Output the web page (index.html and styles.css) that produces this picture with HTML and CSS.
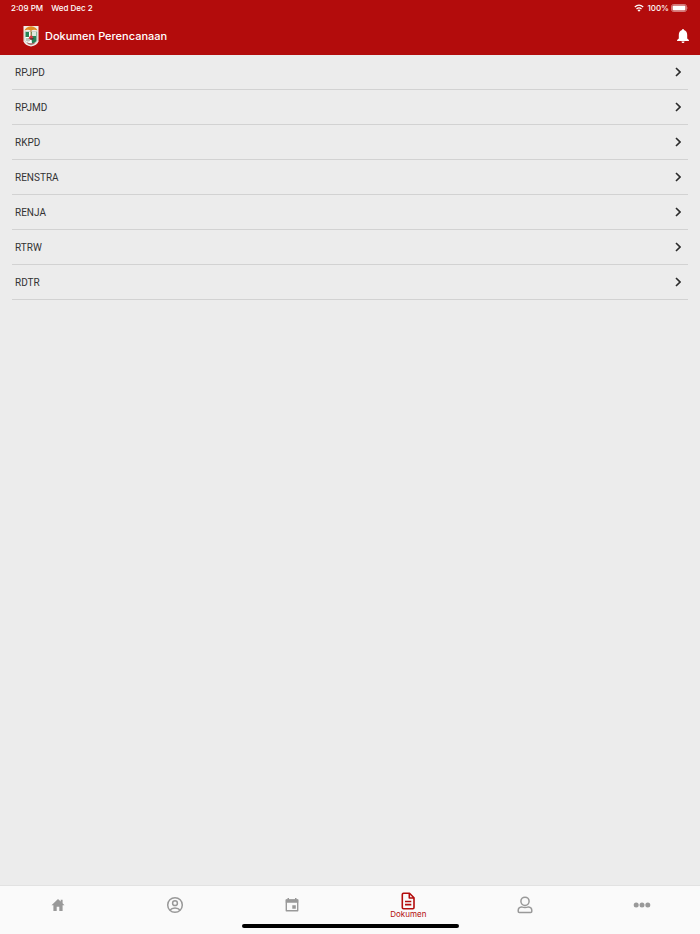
FILE: index.html
```
<!DOCTYPE html>
<html lang="id">
<head>
    <meta charset="UTF-8">
    <meta name="viewport" content="width=device-width, initial-scale=1.0">
    <title>Dokumen Perencanaan</title>
    <link rel="stylesheet" href="styles.css">
</head>
<body>
    <header class="main-header">
        <div class="status-bar">
            <span class="status-time">2:09 PM</span>
            <span class="status-date">Wed Dec 2</span>
            <svg class="wifi" viewBox="0 0 10 8" aria-hidden="true">
                <path d="M.8 3Q5-.8 9.200 3M2.500 5Q5 2.800 7.500 5" fill="none" stroke="#fff" stroke-width="1.300"/>
                <path d="M5 7.700L3.500 6.200Q5 5 6.500 6.200z" fill="#fff"/>
            </svg>
            <span>100%</span>
            <svg class="battery" viewBox="0 0 18 8" aria-hidden="true">
                <rect x=".5" y=".5" width="15" height="7" rx="2" fill="none" stroke="#fff" stroke-opacity=".45"/>
                <rect x="1.500" y="1.500" width="13" height="5" rx="1" fill="#fff"/>
                <path d="M16.500 2.800q1 1.200 0 2.400z" fill="#fff" fill-opacity=".5"/>
            </svg>
        </div>
        <div class="title-bar">
            <svg class="logo" viewBox="0 0 16 22" aria-hidden="true">
                <path d="M.5 1h15v15.500Q14 20.500 8 21.500Q2 20.500.5 16.500z" fill="#f1eeea"/>
                <path d="M2 6.500h12V16q-1.500 3-6 4-4.500-1-6-4z" fill="#fff" stroke="#a7aaa3" stroke-width=".5"/>
                <path d="M2.500 7H6v5H2.500zM8 7h5.500v9Q12 18 9 19z" fill="#268356"/>
                <path d="M9 7h4v4H9z" fill="#dfe8df"/>
                <path d="M3 13h4v3q-2 1-4 0z" fill="#bcc9bd"/>
                <path d="M1.500 5.500Q2.500 2 8 1.200Q13.500 2 14.500 5.500Q11 4.200 8 5.500Q5 4.200 1.500 5.500z" fill="#e18a24"/>
                <path d="M7.500 5h1v6h-1z" fill="#b8803f"/>
                <path d="M5.500 13.500Q6.500 10 9 10.500l1.500 3-2 1.500z" fill="#d93440"/>
                <path d="M7 13.500l4-.5-1 1.500H7z" fill="#393c38"/>
                <path d="M3.500 17Q8 19.500 12.500 17L11 19l-3 1-3-1z" fill="#a9696a"/>
            </svg>
            <h1>Dokumen Perencanaan</h1>
            <button class="bell-button" type="button" aria-label="Notifikasi">
                <svg viewBox="0 0 12 14" aria-hidden="true">
                    <path d="M5 1a1 1 0 0 1 2 0Q10.200 2 10.200 6v3.500l1.700 1.500v.9H.1V11l1.700-1.500V6Q1.800 2 5 1zM4.500 12.500h3a1.500 1.500 0 0 1-3 0z" fill="#fff"/>
                </svg>
            </button>
        </div>
    </header>

    <main>
        <ul class="document-list">
            <li><a href="#rpjpd">RPJPD <svg class="chevron" viewBox="0 0 6 10" aria-hidden="true"><path d="M1 1l4 4-4 4"/></svg></a></li>
            <li><a href="#rpjmd">RPJMD <svg class="chevron" viewBox="0 0 6 10" aria-hidden="true"><path d="M1 1l4 4-4 4"/></svg></a></li>
            <li><a href="#rkpd">RKPD <svg class="chevron" viewBox="0 0 6 10" aria-hidden="true"><path d="M1 1l4 4-4 4"/></svg></a></li>
            <li><a href="#renstra">RENSTRA <svg class="chevron" viewBox="0 0 6 10" aria-hidden="true"><path d="M1 1l4 4-4 4"/></svg></a></li>
            <li><a href="#renja">RENJA <svg class="chevron" viewBox="0 0 6 10" aria-hidden="true"><path d="M1 1l4 4-4 4"/></svg></a></li>
            <li><a href="#rtrw">RTRW <svg class="chevron" viewBox="0 0 6 10" aria-hidden="true"><path d="M1 1l4 4-4 4"/></svg></a></li>
            <li><a href="#rdtr">RDTR <svg class="chevron" viewBox="0 0 6 10" aria-hidden="true"><path d="M1 1l4 4-4 4"/></svg></a></li>
        </ul>
    </main>

    <footer class="bottom-bar">
        <nav class="tabs">
            <a href="#home" aria-label="Beranda">
                <svg viewBox="0 0 18 18" aria-hidden="true"><path d="M9 3L2.500 9.200h1.900V15h3.300v-4.200h2.600V15h3.300V9.200h1.900L13.600 7.300V3.800h-1.900v1.800z" fill="currentColor"/></svg>
            </a>
            <a href="#profil" aria-label="Profil">
                <svg viewBox="0 0 18 18" fill="none" stroke="currentColor" stroke-width="1.500" aria-hidden="true">
                    <circle cx="9" cy="9" r="7.300"/>
                    <circle cx="9" cy="7.200" r="2.400"/>
                    <path d="M4 14.200Q5.500 12 9 12t5 2.200"/>
                </svg>
            </a>
            <a href="#agenda" aria-label="Agenda">
                <svg viewBox="0 0 18 18" aria-hidden="true">
                    <path d="M3.300 4h11.400v10.800H3.300z" fill="none" stroke="currentColor" stroke-width="1.400" stroke-linejoin="round"/>
                    <path d="M2.800 3.500h12.400v3.300H2.800zM4.500 2h1.500v2H4.500zM12 2h1.500v2H12zM9.300 9.300h3.500v3.500H9.300z" fill="currentColor"/>
                </svg>
            </a>
            <a class="active" href="#dokumen" aria-current="page">
                <svg viewBox="0 0 18 18" fill="none" stroke="currentColor" stroke-width="1.600" stroke-linejoin="round" aria-hidden="true">
                    <path d="M4.500 1.300h6L15 5.700v9.800q0 1.200-1.200 1.200H4.500q-1.200 0-1.200-1.200v-13q0-1.200 1.200-1.200zM10.300 1.500V6h4.500M6 9.500h6.300M6 12.600h6.300"/>
                </svg>
                <span>Dokumen</span>
            </a>
            <a href="#akun" aria-label="Akun">
                <svg viewBox="0 0 18 18" fill="none" stroke="currentColor" stroke-width="1.500" aria-hidden="true">
                    <circle cx="9" cy="5.300" r="4.100"/>
                    <path d="M5.500 10.900Q9 12 12.500 10.900 15.800 11.200 15.800 14.500v.8q0 1.100-1.100 1.100H3.300q-1.100 0-1.100-1.100v-.8Q2.200 11.200 5.500 10.900z"/>
                </svg>
            </a>
            <a href="#lainnya" aria-label="Lainnya">
                <svg viewBox="0 0 18 18" fill="currentColor" aria-hidden="true">
                    <circle cx="3.200" cy="9" r="2.500"/>
                    <circle cx="9" cy="9" r="2.500"/>
                    <circle cx="14.800" cy="9" r="2.500"/>
                </svg>
            </a>
        </nav>
        <div class="home-indicator"></div>
    </footer>
</body>
</html>
```
FILE: styles.css
```
* {
    margin: 0;
    padding: 0;
    box-sizing: border-box;
}

body {
    display: flex;
    flex-direction: column;
    min-height: 100vh;
    font-family: Inter, "Liberation Sans", sans-serif;
    background: #ececec;
    color: #333;
}

svg {
    display: block;
    flex-shrink: 0;
}

a {
    color: inherit;
    text-decoration: none;
}

/* Header */
.main-header {
    background: #b30c0c;
    color: #fff;
}

.status-bar {
    display: flex;
    align-items: center;
    height: 16px;
    padding: 0 11px;
    font-size: 8px;
    font-weight: 500;
}

.status-date {
    margin-left: 8px;
}

.wifi {
    width: 10px;
    height: 8px;
    margin-left: auto;
    margin-right: 3px;
}

.battery {
    width: 18px;
    height: 8px;
    margin-left: 2px;
}

.title-bar {
    display: flex;
    align-items: center;
    height: 39px;
    padding: 0 11px 0 23px;
}

.logo {
    width: 16px;
    height: 22px;
    margin-right: 6px;
}

h1 {
    font-size: 11px;
    font-weight: 500;
}

.bell-button {
    margin-left: auto;
    border: none;
    background: none;
    cursor: pointer;
}

.bell-button svg {
    width: 12px;
    height: 14px;
}

/* Document list */
main {
    flex: 1;
}

.document-list {
    margin: 0 12px;
    list-style: none;
    font-family: Roboto, "Liberation Sans", sans-serif;
    font-size: 10px;
}

.document-list a {
    display: flex;
    align-items: center;
    justify-content: space-between;
    height: 35px;
    padding: 0 7px 0 3px;
    border-bottom: 1px solid #d2d2d2;
}

.chevron {
    width: 6px;
    height: 10px;
    fill: none;
    stroke: #2b2b2b;
    stroke-width: 1.6;
}

/* Bottom tabs */
.bottom-bar {
    background: #fafafa;
    border-top: 1px solid #e2e2e2;
}

.tabs {
    display: grid;
    grid-template-columns: repeat(6, 1fr);
    height: 38px;
    color: #999;
}

.tabs a {
    display: flex;
    flex-direction: column;
    align-items: center;
    justify-content: center;
    font-size: 8px;
    line-height: 9px;
}

.tabs svg {
    width: 18px;
    height: 18px;
}

.tabs .active {
    color: #b30c0c;
}

.home-indicator {
    width: 31%;
    height: 4px;
    margin: 0 auto 6px;
    border-radius: 2px;
    background: #000;
}
```
